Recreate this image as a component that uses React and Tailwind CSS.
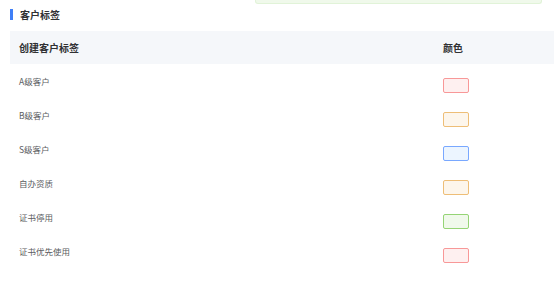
const tags = [
  { name: 'A级客户', bg: 'bg-[#fef0f0]', border: 'border-[#f89898]' },
  { name: 'B级客户', bg: 'bg-[#fdf6ec]', border: 'border-[#eebe77]' },
  { name: 'S级客户', bg: 'bg-[#ecf5ff]', border: 'border-[#79a8ff]' },
  { name: '自办资质', bg: 'bg-[#fdf6ec]', border: 'border-[#eebe77]' },
  { name: '证书停用', bg: 'bg-[#f0f9eb]', border: 'border-[#95d475]' },
  { name: '证书优先使用', bg: 'bg-[#fef0f0]', border: 'border-[#f89898]' },
];

export default function App() {
  return (
    <div className="min-h-screen bg-white font-['Noto_Sans_CJK_SC','Noto_Sans',sans-serif]">
      <div className="ml-[255px] h-[4px] w-[287px] rounded-b-[3px] border-x border-b border-[#e1f3d8] bg-[#f0f9eb]" />

      <div className="ml-[10px] mt-[5px] flex h-[11px] items-center">
        <span className="h-[11px] w-[3px] bg-[#3f7ff7]" />
        <h2 className="ml-[7px] text-[10px] font-bold leading-[10px] text-[#303133]">客户标签</h2>
      </div>

      <div className="ml-[10px] mt-[11px]">
        <div className="grid h-[33px] grid-cols-[423px_1fr] items-center bg-[#f5f7fa] text-[10px] font-bold text-[#303133]">
          <div className="pl-[9px]">创建客户标签</div>
          <div className="pl-[10px]">颜色</div>
        </div>
        {tags.map((tag) => (
          <div key={tag.name} className="grid h-[34px] grid-cols-[423px_1fr] text-[8.5px] text-[#5a5c61]">
            <div className="flex items-center pl-[9px]">{tag.name}</div>
            <div className="pl-[10px] pt-[14px]">
              <div className={`h-[15px] w-[26px] rounded-[2px] border ${tag.border} ${tag.bg}`} />
            </div>
          </div>
        ))}
      </div>
    </div>
  );
}
